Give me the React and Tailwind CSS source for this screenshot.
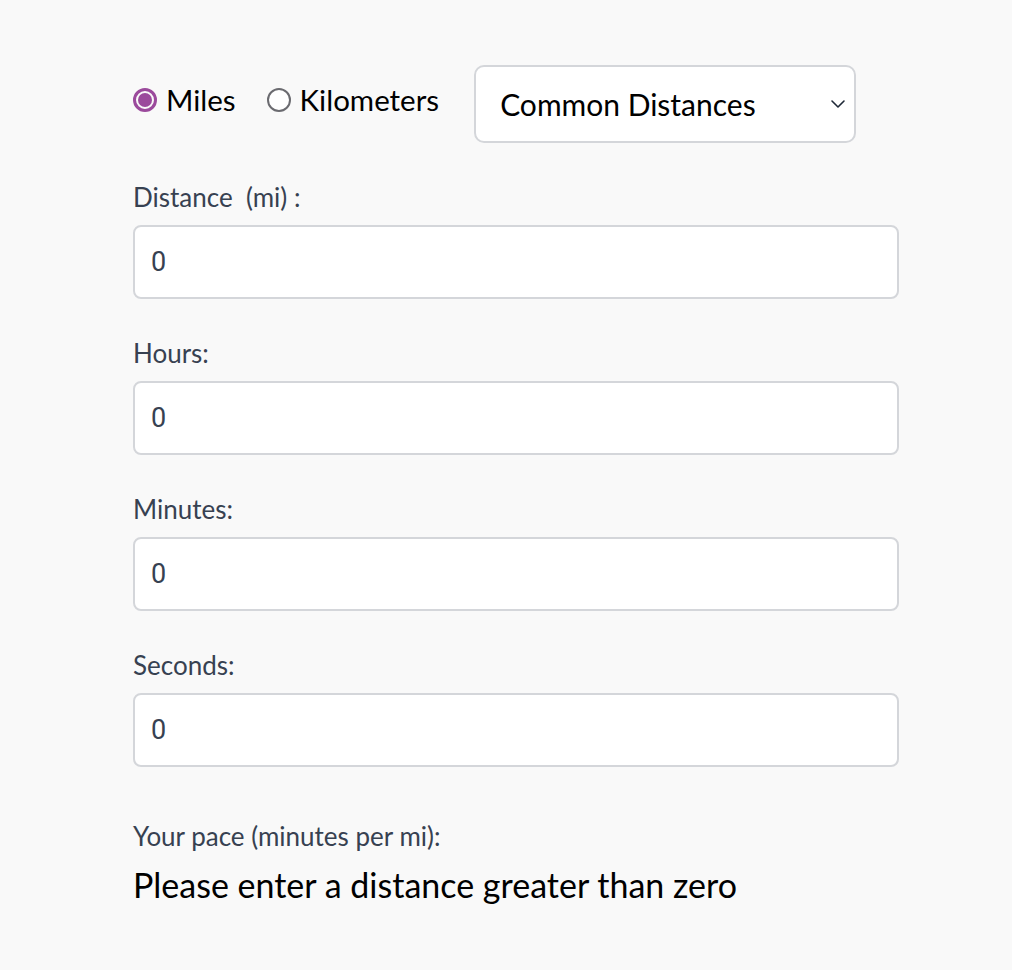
import React, { useState } from 'react';

const Field = ({ label, value, onChange }) => (
    <div className="flex flex-col">
        <label className="text-[26px] leading-[32px] text-[#374151]">{label}</label>
        <input
            type="text"
            value={value}
            onChange={(e) => onChange(e.target.value)}
            style={{ fontFamily: 'Roboto, "Noto Sans", sans-serif' }}
            className="mt-[12px] h-[74px] w-full rounded-[8px] border-2 border-[#d4d6da] bg-white px-[16px] text-[27px] text-[#374151] outline-none"
        />
    </div>
);

const Radio = ({ checked, label, onClick }) => (
    <button type="button" onClick={onClick} className="flex items-center gap-[9px]">
        {checked ? (
            <span className="flex h-[24px] w-[24px] items-center justify-center rounded-full border-[3px] border-[#9b4a9c]">
                <span className="h-[14px] w-[14px] rounded-full bg-[#9b4a9c]" />
            </span>
        ) : (
            <span className="h-[24px] w-[24px] rounded-full border-2 border-[#6b6b70] bg-white" />
        )}
        <span className="text-[29.5px] leading-none text-black">{label}</span>
    </button>
);

export default function App() {
    const [unit, setUnit] = useState('mi');
    const [vals, setVals] = useState({ d: '0', h: '0', m: '0', s: '0' });
    const set = (k) => (v) => setVals({ ...vals, [k]: v });

    return (
        <div className="min-h-screen bg-[#f9f9f9]" style={{ fontFamily: '"Lato", "Noto Sans", sans-serif' }}>
            <div className="pl-[133px] pr-[113px] pt-[65px]">
                <div className="flex items-center">
                    <div className="flex items-center pb-[8px]">
                        <Radio checked={unit === 'mi'} label="Miles" onClick={() => setUnit('mi')} />
                        <div className="w-[31px]" />
                        <Radio checked={unit === 'km'} label="Kilometers" onClick={() => setUnit('km')} />
                    </div>
                    <div className="ml-[35px] flex h-[78px] w-[382px] items-center justify-between rounded-[10px] border-2 border-[#d4d6da] bg-white pl-[24px] pr-[8px]">
                        <span className="text-[30px] text-black">Common Distances</span>
                        <svg width="16" height="16" viewBox="0 0 16 16" fill="none" stroke="#1f2937" strokeWidth="1.6" strokeLinecap="round" strokeLinejoin="round">
                            <path d="M2 5l6 6 6-6" />
                        </svg>
                    </div>
                </div>

                <div className="mt-[38px] flex flex-col gap-[38px]">
                    <Field label={'Distance\u00a0\u00a0(mi) :'} value={vals.d} onChange={set('d')} />
                    <Field label="Hours:" value={vals.h} onChange={set('h')} />
                    <Field label="Minutes:" value={vals.m} onChange={set('m')} />
                    <Field label="Seconds:" value={vals.s} onChange={set('s')} />
                </div>

                <div className="mt-[53px] text-[26px] leading-[32px] text-[#374151]">Your pace (minutes per {unit}):</div>
                <div className="mt-[13px] text-[34px] leading-[40px] text-black">Please enter a distance greater than zero</div>
            </div>
        </div>
    );
}
